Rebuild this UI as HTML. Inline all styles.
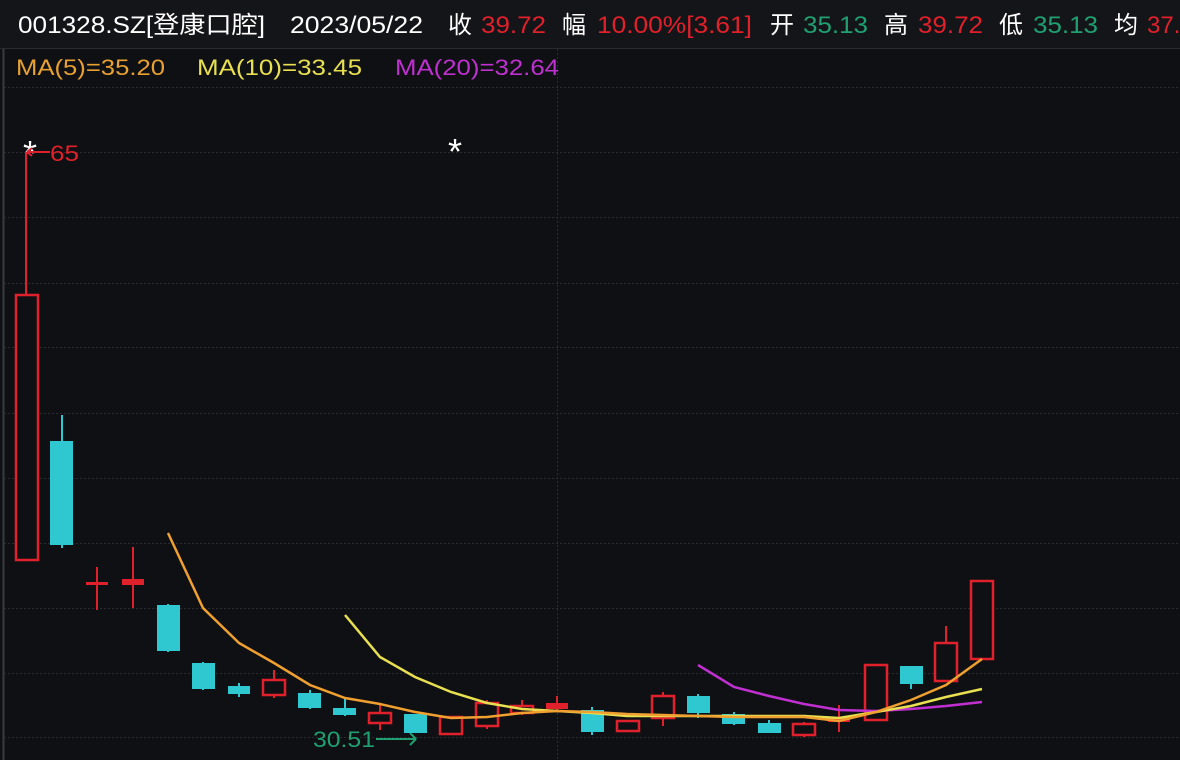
<!DOCTYPE html>
<html><head><meta charset="utf-8"><style>
html,body{margin:0;padding:0;background:#0f1014;width:1180px;height:760px;overflow:hidden}
svg{display:block}
text{font-family:"Liberation Sans","Noto Sans CJK SC",sans-serif}
</style></head><body>
<svg width="1180" height="760" viewBox="0 0 1180 760" xmlns="http://www.w3.org/2000/svg">
<rect width="1180" height="760" fill="#0f1014"/>
<rect width="1180" height="48" fill="#141519"/>
<line x1="0" y1="48.5" x2="1180" y2="48.5" stroke="#2a2b30" stroke-width="1"/>
<line x1="3.5" y1="49" x2="3.5" y2="760" stroke="#3a3b40" stroke-width="2"/>
<g stroke="#2a2c32" stroke-width="1" stroke-dasharray="2,2">
<line x1="4" y1="87.5" x2="1180" y2="87.5"/>
<line x1="4" y1="152.5" x2="1180" y2="152.5"/>
<line x1="4" y1="217.5" x2="1180" y2="217.5"/>
<line x1="4" y1="283.5" x2="1180" y2="283.5"/>
<line x1="4" y1="347.5" x2="1180" y2="347.5"/>
<line x1="4" y1="413.5" x2="1180" y2="413.5"/>
<line x1="4" y1="478.5" x2="1180" y2="478.5"/>
<line x1="4" y1="543.5" x2="1180" y2="543.5"/>
<line x1="4" y1="608.5" x2="1180" y2="608.5"/>
<line x1="4" y1="673.5" x2="1180" y2="673.5"/>
<line x1="4" y1="737.5" x2="1180" y2="737.5"/>
<line x1="557.5" y1="49" x2="557.5" y2="760"/>
</g>
<g font-size="24">
<text x="18" y="33" fill="#ffffff" textLength="247" lengthAdjust="spacingAndGlyphs">001328.SZ[登康口腔]</text>
<text x="290" y="33" fill="#ffffff" textLength="133" lengthAdjust="spacingAndGlyphs">2023/05/22</text>
<text x="448" y="33" fill="#ffffff">收</text>
<text x="481" y="33" fill="#e0202a" textLength="65" lengthAdjust="spacingAndGlyphs">39.72</text>
<text x="562" y="33" fill="#ffffff">幅</text>
<text x="597" y="33" fill="#e0202a" textLength="155" lengthAdjust="spacingAndGlyphs">10.00%[3.61]</text>
<text x="770" y="33" fill="#ffffff">开</text>
<text x="803" y="33" fill="#20a070" textLength="65" lengthAdjust="spacingAndGlyphs">35.13</text>
<text x="884" y="33" fill="#ffffff">高</text>
<text x="918" y="33" fill="#e0202a" textLength="65" lengthAdjust="spacingAndGlyphs">39.72</text>
<text x="999" y="33" fill="#ffffff">低</text>
<text x="1033" y="33" fill="#20a070" textLength="65" lengthAdjust="spacingAndGlyphs">35.13</text>
<text x="1114" y="33" fill="#ffffff">均</text>
<text x="1147" y="33" fill="#e0202a">37.</text>
</g>
<g font-size="22">
<text x="16" y="75" fill="#e8a030" textLength="149" lengthAdjust="spacingAndGlyphs">MA(5)=35.20</text>
<text x="197" y="75" fill="#e8e050" textLength="165" lengthAdjust="spacingAndGlyphs">MA(10)=33.45</text>
<text x="395" y="75" fill="#c030d0" textLength="164" lengthAdjust="spacingAndGlyphs">MA(20)=32.64</text>
</g>
<text x="23" y="166" font-size="36" fill="#ffffff">*</text>
<text x="448" y="164" font-size="36" fill="#ffffff">*</text>
<text x="50" y="161" font-size="22" fill="#e0202a" textLength="29" lengthAdjust="spacingAndGlyphs">65</text>
<path d="M27 152 L50 152 M27 152 l5 -4 M27 152 l5 4" stroke="#e0202a" stroke-width="2" fill="none"/>
<text x="313" y="747" font-size="22" fill="#20a070" textLength="62" lengthAdjust="spacingAndGlyphs">30.51</text>
<path d="M376 739 L416 739 M416 739 l-6 -6 M416 739 l-6 6" stroke="#20a070" stroke-width="2" fill="none"/>
<g stroke-width="2">
<line x1="26" y1="152" x2="26" y2="295" stroke="#e0202a"/>
<line x1="62" y1="415" x2="62" y2="548" stroke="#30c8d0"/>
<line x1="97" y1="567" x2="97" y2="610" stroke="#e0202a"/>
<line x1="133" y1="547" x2="133" y2="608" stroke="#e0202a"/>
<line x1="168" y1="604" x2="168" y2="652" stroke="#30c8d0"/>
<line x1="203" y1="662" x2="203" y2="690" stroke="#30c8d0"/>
<line x1="239" y1="683" x2="239" y2="697" stroke="#30c8d0"/>
<line x1="274" y1="670" x2="274" y2="698" stroke="#e0202a"/>
<line x1="310" y1="690" x2="310" y2="709" stroke="#30c8d0"/>
<line x1="345" y1="697" x2="345" y2="716" stroke="#30c8d0"/>
<line x1="380" y1="703" x2="380" y2="730" stroke="#e0202a"/>
<line x1="487" y1="700" x2="487" y2="729" stroke="#e0202a"/>
<line x1="522" y1="700" x2="522" y2="715" stroke="#e0202a"/>
<line x1="557" y1="696" x2="557" y2="711" stroke="#e0202a"/>
<line x1="592" y1="707" x2="592" y2="735" stroke="#30c8d0"/>
<line x1="663" y1="692" x2="663" y2="726" stroke="#e0202a"/>
<line x1="698" y1="694" x2="698" y2="718" stroke="#30c8d0"/>
<line x1="734" y1="712" x2="734" y2="725" stroke="#30c8d0"/>
<line x1="769" y1="720" x2="769" y2="733" stroke="#30c8d0"/>
<line x1="804" y1="722" x2="804" y2="737" stroke="#e0202a"/>
<line x1="839" y1="705" x2="839" y2="732" stroke="#e0202a"/>
<line x1="911" y1="666" x2="911" y2="689" stroke="#30c8d0"/>
<line x1="946" y1="626" x2="946" y2="643" stroke="#e0202a"/>
</g>
<g fill="#0f1014" stroke="#e0202a" stroke-width="2.5">
<rect x="16" y="295" width="22" height="265"/>
<rect x="263" y="680" width="22" height="15"/>
<rect x="369" y="713" width="22" height="10"/>
<rect x="440" y="717" width="22" height="17"/>
<rect x="476" y="703" width="22" height="23"/>
<rect x="511" y="706" width="22" height="7"/>
<rect x="617" y="721" width="22" height="10"/>
<rect x="652" y="696" width="22" height="22"/>
<rect x="793" y="724" width="22" height="11"/>
<rect x="865" y="665" width="22" height="55"/>
<rect x="935" y="643" width="22" height="38"/>
<rect x="971" y="581" width="22" height="78"/>
</g>
<g fill="#e0202a">
<rect x="86" y="582" width="22" height="3"/>
<rect x="122" y="579" width="22" height="6"/>
<rect x="546" y="703" width="22" height="6"/>
<rect x="828" y="718" width="22" height="4"/>
</g>
<g fill="#30c8d0">
<rect x="50" y="441" width="23" height="104"/>
<rect x="157" y="605" width="23" height="46"/>
<rect x="192" y="663" width="23" height="26"/>
<rect x="228" y="686" width="22" height="8"/>
<rect x="298" y="693" width="23" height="15"/>
<rect x="333" y="708" width="23" height="7"/>
<rect x="404" y="714" width="23" height="19"/>
<rect x="581" y="710" width="23" height="22"/>
<rect x="687" y="696" width="23" height="17"/>
<rect x="722" y="714" width="23" height="10"/>
<rect x="758" y="723" width="23" height="10"/>
<rect x="900" y="666" width="23" height="18"/>
</g>
<polyline fill="none" stroke="#c030d0" stroke-width="2.5" points="698,665 734,687 769,696 804,704 839,710 876,711 911,709 946,706 982,702"/>
<polyline fill="none" stroke="#e8e050" stroke-width="2.5" points="345,615 380,657 415,677 451,692 487,703 522,709 557,711 592,713 627,716 663,716 698,716 734,716 769,716 804,716 839,718 876,712 911,706 946,697 982,689"/>
<polyline fill="none" stroke="#f0a030" stroke-width="2.5" points="168,533 203,608 239,643 274,663 310,685 345,698 380,704 415,712 451,718 487,717 522,713 557,711 592,712 627,714 663,715 698,716 734,717 769,717 804,717 839,721 876,712 911,700 946,685 982,659"/>
</svg>
</body></html>
